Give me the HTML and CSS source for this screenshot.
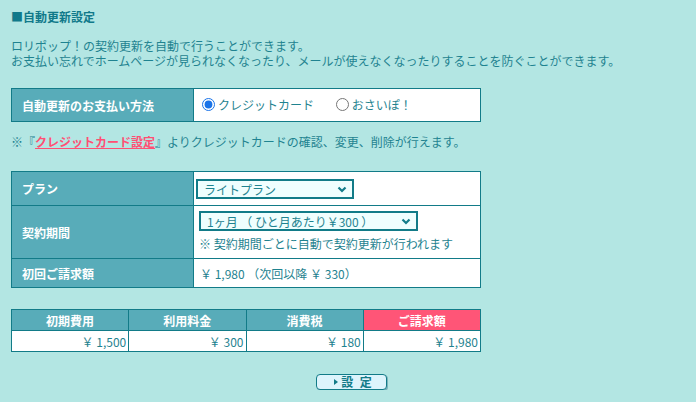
FILE: index.html
```html
<!DOCTYPE html>
<html lang="ja">
<head>
  <meta charset="UTF-8">
  <meta name="viewport" content="width=device-width, initial-scale=1.0">
  <title>自動更新設定</title>
  <link rel="stylesheet" href="styles.css">
</head>
<body>
  <div class="container">
    <h1 class="title">■自動更新設定</h1>
    <p class="lead">ロリポップ！の契約更新を自動で行うことができます。<br>お支払い忘れでホームページが見られなくなったり、メールが使えなくなったりすることを防ぐことができます。</p>

    <table class="form-table pay-table">
      <tr>
        <th>自動更新のお支払い方法</th>
        <td>
          <label class="radio"><input type="radio" name="pay" value="card" checked>クレジットカード</label>
          <label class="radio"><input type="radio" name="pay" value="osaipo">おさいぽ！</label>
        </td>
      </tr>
    </table>

    <p class="note">※『<a href="#" class="pink-link">クレジットカード設定</a>』よりクレジットカードの確認、変更、削除が行えます。</p>

    <table class="form-table plan-table">
      <tr class="row-plan">
        <th>プラン</th>
        <td>
          <span class="select-wrap plan-select">
            <select>
              <option>ライトプラン</option>
            </select>
            <svg class="chevron" width="10" height="7" viewBox="0 0 10 7"><path d="M1.5 1.5 L5 5 L8.5 1.5" fill="none" stroke="#137c8a" stroke-width="2.2"/></svg>
          </span>
        </td>
      </tr>
      <tr class="row-term">
        <th>契約期間</th>
        <td>
          <span class="select-wrap term-select">
            <select>
              <option>1ヶ月 （ ひと月あたり￥300 ）</option>
            </select>
            <svg class="chevron" width="10" height="7" viewBox="0 0 10 7"><path d="M1.5 1.5 L5 5 L8.5 1.5" fill="none" stroke="#137c8a" stroke-width="2.2"/></svg>
          </span>
          <div class="sub-note">※ 契約期間ごとに自動で契約更新が行われます</div>
        </td>
      </tr>
      <tr class="row-first">
        <th>初回ご請求額</th>
        <td>￥ 1,980 （次回以降 ￥ 330）</td>
      </tr>
    </table>

    <table class="sum-table">
      <tr>
        <th>初期費用</th>
        <th>利用料金</th>
        <th>消費税</th>
        <th class="total">ご請求額</th>
      </tr>
      <tr>
        <td>￥ 1,500</td>
        <td>￥ 300</td>
        <td>￥ 180</td>
        <td>￥ 1,980</td>
      </tr>
    </table>

    <div class="actions">
      <button class="set-btn"><span class="arrow"></span><span class="btn-label">設 定</span></button>
    </div>
  </div>
</body>
</html>
```

FILE: styles.css
```css
body {
  margin: 0;
  padding: 0;
  background: #b3e6e3;
  color: #1f8390;
  font-family: "Noto Sans CJK JP", "Noto Sans", sans-serif;
  font-size: 12px;
  line-height: 15px;
}
.container {
  padding: 9px 11px 0 11px;
}
.title {
  margin: 0;
  font-size: 12px;
  line-height: 15px;
  font-weight: bold;
  color: #10798a;
}
.lead {
  margin: 14px 0 0 0;
}
.form-table, .sum-table {
  width: 470px;
  border-collapse: collapse;
  table-layout: fixed;
}
.form-table th, .form-table td,
.sum-table th, .sum-table td {
  border: 1px solid #127b88;
}
.form-table th {
  width: 182px;
  background: #58acb9;
  color: #ffffff;
  text-align: left;
  font-weight: bold;
  padding: 0 0 0 10px;
  box-sizing: border-box;
}
.form-table td {
  background: #ffffff;
  padding: 0 0 0 6px;
}
.pay-table {
  margin-top: 20px;
}
.pay-table tr {
  height: 33px;
}
.radio {
  display: inline-flex;
  align-items: center;
  margin-right: 17px;
  color: #1f8390;
}
.radio input {
  margin: 0 3px 0 2px;
  width: 13px;
  height: 13px;
  accent-color: #1a73e8;
}
.note {
  margin: 12px 0 0 0;
}
.pink-link {
  color: #ff4f73;
  font-weight: bold;
}
.plan-table {
  margin-top: 22px;
}
.row-plan {
  height: 34px;
}
.row-plan td {
  padding-left: 2px;
}
.row-term {
  height: 53px;
}
.row-term td {
  padding-left: 5px;
}
.row-first {
  height: 29px;
}
.select-wrap {
  position: relative;
  display: inline-block;
  vertical-align: middle;
}
.select-wrap select {
  appearance: none;
  -webkit-appearance: none;
  background: #effefe;
  border: 2px solid #127b88;
  border-radius: 0;
  color: #1f8390;
  font-family: inherit;
  font-size: 12px;
  height: 20px;
  padding: 0 0 0 6px;
  display: block;
}
.plan-select select {
  width: 158px;
}
.term-select {
  margin-top: 2px;
}
.term-select select {
  width: 219px;
}
.chevron {
  position: absolute;
  right: 7px;
  top: 7px;
  pointer-events: none;
}
.sub-note {
  margin-top: 5px;
  margin-bottom: 4px;
}
.sum-table {
  margin-top: 21px;
}
.sum-table th {
  background: #58acb9;
  color: #ffffff;
  font-weight: bold;
  height: 20px;
  padding: 0;
  text-align: center;
}
.sum-table th.total {
  background: #ff5577;
}
.sum-table td {
  background: #ffffff;
  text-align: right;
  height: 20px;
  padding: 0 2px 0 0;
}
.actions {
  margin-top: 20px;
  text-align: center;
  padding-left: 6px;
}
.set-btn {
  width: 71px;
  height: 16px;
  padding: 0 0 0 4px;
  background: #ddf4fc;
  border: 1px solid #127b88;
  border-radius: 4px;
  box-shadow: 1px 1px 0 #7bb3bb;
  color: #127b88;
  font-family: inherit;
  font-size: 12px;
  font-weight: bold;
  line-height: 14px;
  display: inline-flex;
  align-items: center;
  justify-content: center;
  cursor: pointer;
}
.btn-label {
  word-spacing: 4px;
}
.arrow {
  display: inline-block;
  width: 0;
  height: 0;
  border-top: 3px solid transparent;
  border-bottom: 3px solid transparent;
  border-left: 4px solid #127b88;
  margin-right: 3px;
}
```
